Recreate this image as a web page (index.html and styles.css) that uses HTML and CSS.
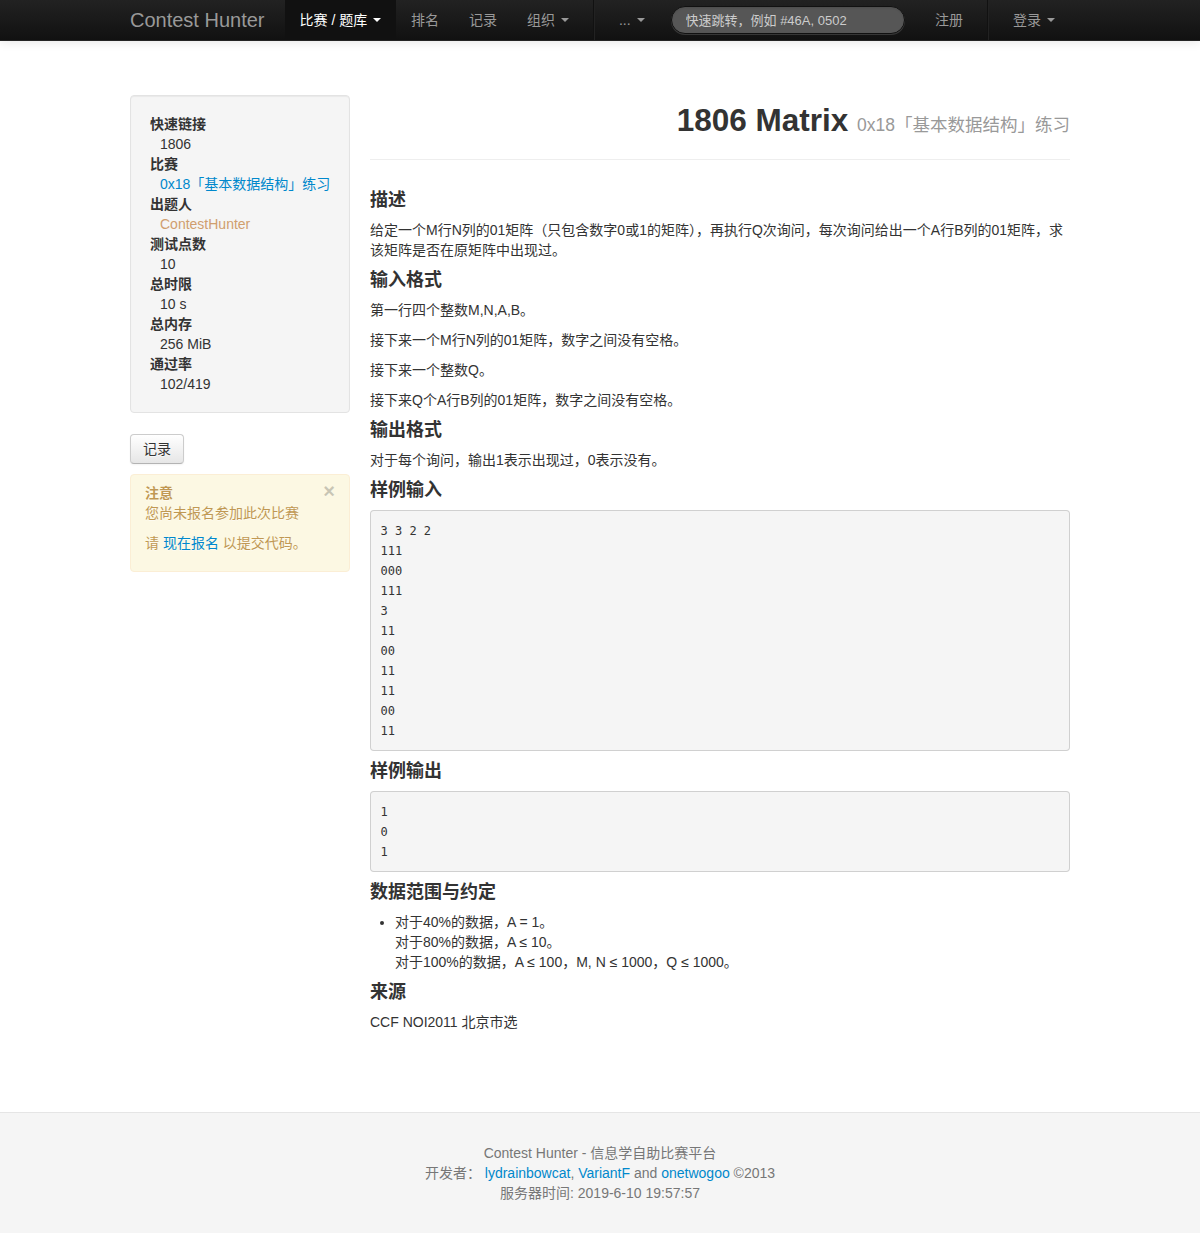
FILE: index.html
```html
<!DOCTYPE html>
<html lang="zh-CN">
<head>
<meta charset="utf-8">
<title>1806 Matrix - Contest Hunter</title>
<link rel="stylesheet" href="styles.css">
</head>
<body>
<div class="navbar">
  <div class="container nav-inner">
    <a class="brand" href="#">Contest Hunter</a>
    <ul class="nav">
      <li class="active"><a href="#">比赛 / 题库 <b class="caret"></b></a></li>
      <li><a href="#">排名</a></li>
      <li><a href="#">记录</a></li>
      <li><a href="#">组织 <b class="caret"></b></a></li>
      <li class="divider-vertical"></li>
      <li><a href="#">... <b class="caret"></b></a></li>
    </ul>
    <form class="navbar-search"><input class="search-query" type="text" placeholder="快速跳转，例如 #46A, 0502"></form>
    <ul class="nav nav-right">
      <li><a href="#">注册</a></li>
      <li class="divider-vertical"></li>
      <li><a href="#">登录 <b class="caret"></b></a></li>
    </ul>
  </div>
</div>

<div class="container main-row">
  <div class="sidebar">
    <div class="well">
      <dl class="info">
        <dt>快速链接</dt><dd>1806</dd>
        <dt>比赛</dt><dd><a href="#">0x18「基本数据结构」练习</a></dd>
        <dt>出题人</dt><dd><span class="user">ContestHunter</span></dd>
        <dt>测试点数</dt><dd>10</dd>
        <dt>总时限</dt><dd>10 s</dd>
        <dt>总内存</dt><dd>256 MiB</dd>
        <dt>通过率</dt><dd>102/419</dd>
      </dl>
    </div>
    <p class="btn-row"><a class="btn" href="#">记录</a></p>
    <div class="alert">
      <span class="close">×</span>
      <strong class="alert-title">注意</strong>
      <p>您尚未报名参加此次比赛</p>
      <p>请 <a href="#">现在报名</a> 以提交代码。</p>
    </div>
  </div>

  <div class="content">
    <div class="page-header">
      <h2>1806 Matrix <small>0x18「基本数据结构」练习</small></h2>
    </div>
    <h4>描述</h4>
    <p>给定一个M行N列的01矩阵（只包含数字0或1的矩阵），再执行Q次询问，每次询问给出一个A行B列的01矩阵，求该矩阵是否在原矩阵中出现过。</p>
    <h4>输入格式</h4>
    <p>第一行四个整数M,N,A,B。</p>
    <p>接下来一个M行N列的01矩阵，数字之间没有空格。</p>
    <p>接下来一个整数Q。</p>
    <p>接下来Q个A行B列的01矩阵，数字之间没有空格。</p>
    <h4>输出格式</h4>
    <p>对于每个询问，输出1表示出现过，0表示没有。</p>
    <h4>样例输入</h4>
<pre>3 3 2 2
111
000
111
3
11
00
11
11
00
11</pre>
    <h4>样例输出</h4>
<pre>1
0
1</pre>
    <h4>数据范围与约定</h4>
    <ul>
      <li>对于40%的数据，A = 1。<br>对于80%的数据，A ≤ 10。<br>对于100%的数据，A ≤ 100，M, N ≤ 1000，Q ≤ 1000。</li>
    </ul>
    <h4>来源</h4>
    <p>CCF NOI2011 北京市选</p>
  </div>
</div>

<div class="footer">
  <p>Contest Hunter - 信息学自助比赛平台</p>
  <p>开发者： <a href="#">lydrainbowcat</a>, <a href="#">VariantF</a> and <a href="#">onetwogoo</a> ©2013</p>
  <p>服务器时间: 2019-6-10 19:57:57</p>
</div>
</body>
</html>
```

FILE: styles.css
```css
* { box-sizing: border-box; }
html, body { margin: 0; padding: 0; }
body {
  font-family: "Liberation Sans", Arial, "Noto Sans CJK SC", sans-serif;
  font-size: 14px;
  line-height: 20px;
  color: #333;
  background: #fff;
  padding-bottom: 26px;
}
a { color: #0088cc; text-decoration: none; }
p { margin: 0 0 10px; }

.container { width: 940px; margin: 0 auto; }

/* navbar */
.navbar {
  height: 41px;
  background: linear-gradient(to bottom, #222222, #111111);
  border-bottom: 1px solid #252525;
  box-shadow: 0 1px 10px rgba(0,0,0,0.1);
}
.nav-inner { display: flex; align-items: flex-start; height: 40px; }
.brand {
  display: block;
  margin-left: -20px;
  padding: 10px 20px;
  font-size: 20px;
  line-height: 20px;
  color: #999;
  font-weight: 200;
}
.nav { list-style: none; margin: 0; padding: 0; display: flex; }
.nav li a {
  display: block;
  padding: 10px 15px;
  color: #999;
  line-height: 20px;
  white-space: nowrap;
}
.nav li.active a { background: #111; color: #fff; }
.caret {
  display: inline-block;
  width: 0; height: 0;
  vertical-align: top;
  margin-top: 8px;
  margin-left: 2px;
  border-top: 4px solid #999;
  border-left: 4px solid transparent;
  border-right: 4px solid transparent;
}
.nav li.active .caret { border-top-color: #fff; }
.divider-vertical {
  height: 40px;
  margin: 0 9px;
  border-left: 1px solid #111;
  border-right: 1px solid #222;
}
.navbar-search { margin: 6px 0 0 11px; }
.search-query {
  display: block;
  width: 234px;
  height: 28px;
  padding: 4px 14px;
  border: 1px solid #111;
  border-radius: 15px;
  background: #565656;
  color: #fff;
  font-family: "Liberation Sans", Arial, "Noto Sans CJK SC", sans-serif;
  font-size: 13px;
  box-shadow: inset 0 1px 2px rgba(0,0,0,0.1), 0 1px 0 rgba(255,255,255,0.15);
  outline: none;
}
.search-query::placeholder { color: #ccc; }
.nav-right { margin-left: auto; }

/* layout */
.main-row {
  display: flex;
  gap: 20px;
  padding-top: 54px;
  padding-bottom: 70px;
}
.sidebar { width: 220px; flex: none; }
.content { width: 700px; flex: none; }

.well {
  background: #f5f5f5;
  border: 1px solid #e3e3e3;
  border-radius: 4px;
  padding: 18px 19px;
  margin-bottom: 21px;
  box-shadow: inset 0 1px 1px rgba(0,0,0,0.05);
}
.info { margin: 0; }
.info dt { font-weight: bold; }
.info dd { margin-left: 10px; white-space: nowrap; }
.user { color: #d09e6e; }

.btn-row { margin: 0 0 10px; }
.btn {
  display: inline-block;
  padding: 4px 12px;
  font-size: 14px;
  line-height: 20px;
  color: #333;
  border: 1px solid #cccccc;
  border-bottom-color: #b3b3b3;
  border-radius: 4px;
  background: linear-gradient(to bottom, #ffffff, #e6e6e6);
  box-shadow: inset 0 1px 0 rgba(255,255,255,0.2), 0 1px 2px rgba(0,0,0,0.05);
  text-shadow: 0 1px 1px rgba(255,255,255,0.75);
}

.alert {
  position: relative;
  padding: 8px 35px 8px 14px;
  background: #fcf8e3;
  border: 1px solid #fbeed5;
  border-radius: 4px;
  color: #c09853;
  text-shadow: 0 1px 0 rgba(255,255,255,0.5);
  margin-bottom: 20px;
}
.alert-title { display: block; }
.close {
  position: absolute;
  top: 6px;
  right: 14px;
  font-size: 20px;
  font-weight: bold;
  line-height: 20px;
  color: #000;
  opacity: 0.2;
  text-shadow: 0 1px 0 #fff;
}

/* content */
.page-header {
  padding-bottom: 9px;
  margin: 0 0 30px;
  border-bottom: 1px solid #eeeeee;
}
.page-header h2 {
  margin: 5px 0 10px;
  height: 40px;
  text-align: right;
  font-size: 31.5px;
  line-height: 40px;
  font-weight: bold;
  color: #333;
  white-space: nowrap;
}
.page-header h2 small {
  font-size: 17.5px;
  line-height: 1;
  font-weight: normal;
  color: #999;
}
h4 {
  font-size: 18px;
  line-height: 20px;
  margin: 10px 0;
  font-weight: bold;
  color: #333;
}
pre {
  margin: 0 0 10px;
  padding: 9.5px;
  font-family: "DejaVu Sans Mono", "Liberation Mono", monospace;
  font-size: 12px;
  line-height: 20px;
  color: #333;
  background: #f5f5f5;
  border: 1px solid #ccc;
  border: 1px solid rgba(0,0,0,0.15);
  border-radius: 4px;
  white-space: pre-wrap;
}
ul { margin: 0 0 10px 25px; padding: 0; }

/* footer */
.footer {
  background: #f5f5f5;
  border-top: 1px solid #e5e5e5;
  padding: 30px 0;
  text-align: center;
  color: #777;
}
.footer p { margin: 0; }
```
